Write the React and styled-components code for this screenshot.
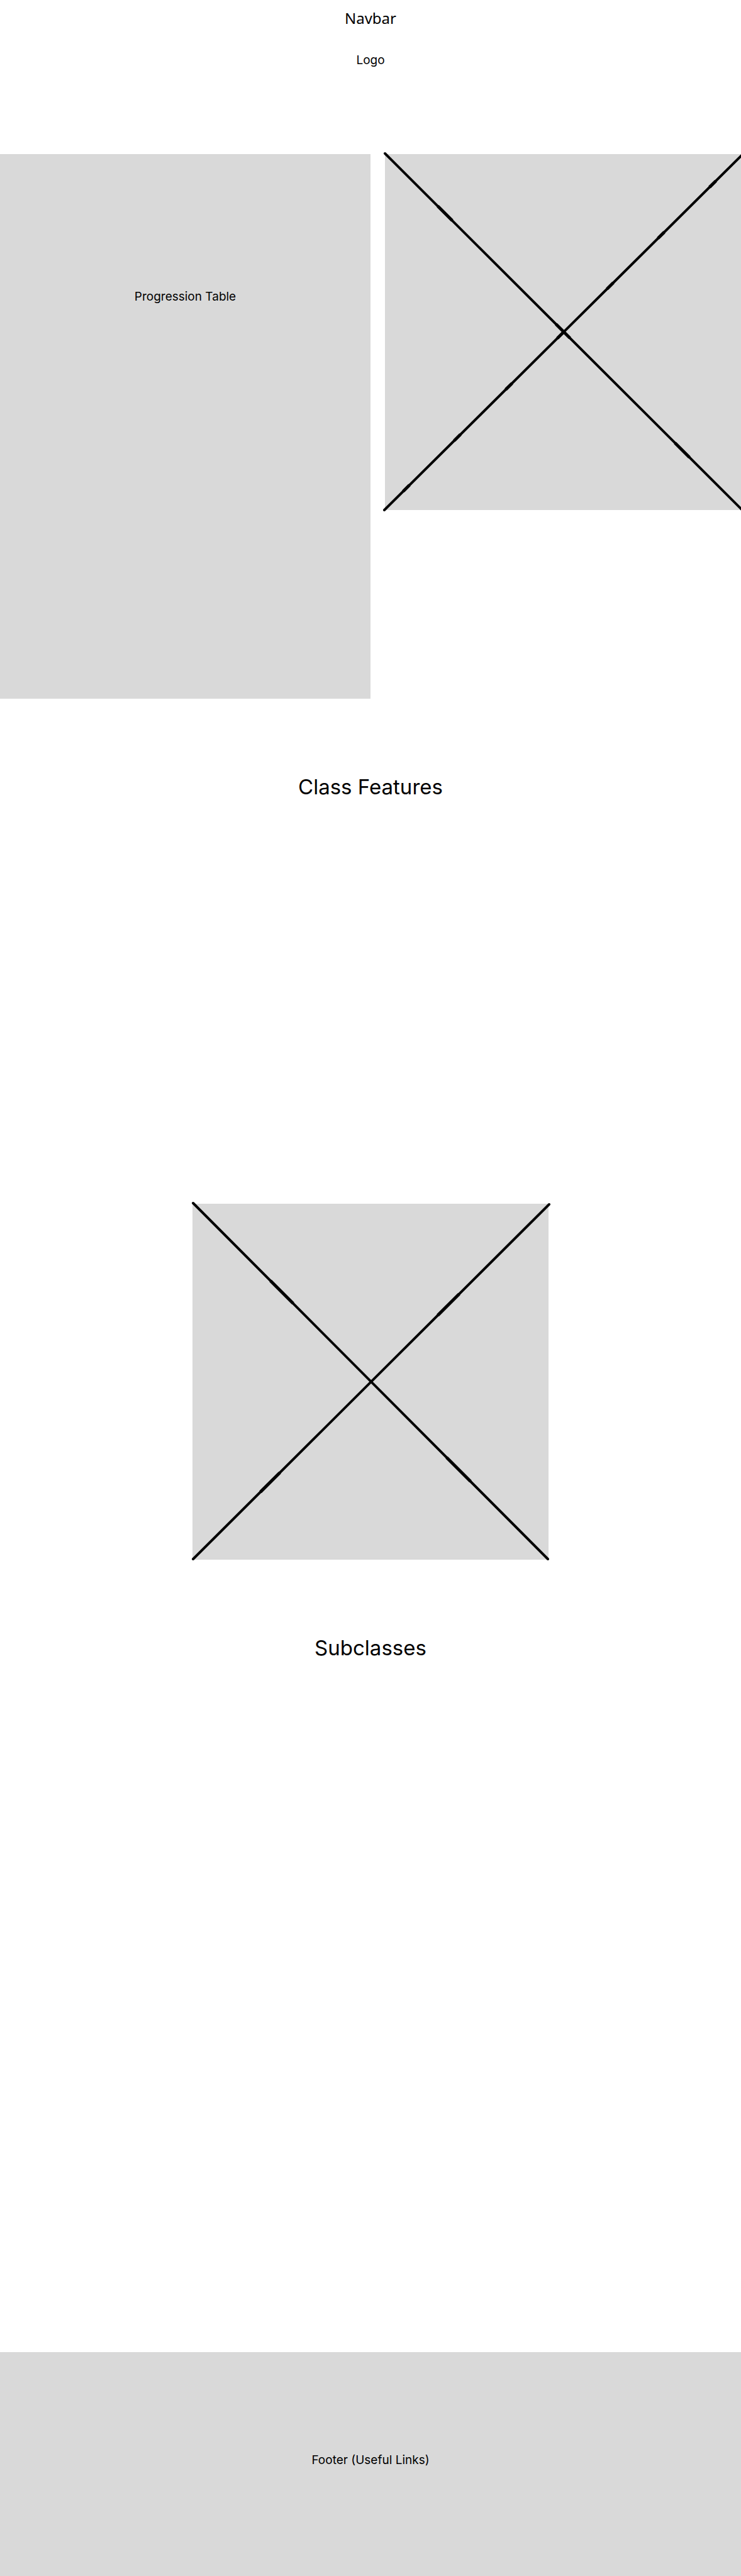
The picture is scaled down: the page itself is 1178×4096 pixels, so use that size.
import React from "react";
import styled, { createGlobalStyle } from "styled-components";

const GlobalStyle = createGlobalStyle`
  * {
    box-sizing: border-box;
  }

  body {
    margin: 0;
    background: #fff;
    color: #000;
    font-family: Inter, "Liberation Sans", sans-serif;
    font-size: 19px;
    line-height: 24px;
    overflow-x: clip;
  }
`;

const Page = styled.div`
  display: flex;
  flex-direction: column;
`;

const Header = styled.header`
  display: flex;
  flex-direction: column;
  align-items: center;
  gap: 39px;
  padding: 13px 0 137px;
`;

const Nav = styled.nav`
  font-family: "Noto Sans", "Open Sans", sans-serif;
  font-size: 24px;
  line-height: 32px;
`;

const Label = styled.p`
  margin: 0;
  text-align: center;
`;

const Hero = styled.section`
  display: grid;
  grid-template-columns: 50% minmax(0, 1fr);
  column-gap: 23px;
  align-items: start;
`;

const Panel = styled.div`
  min-height: 866px;
  padding-top: 215px;
  background: #d9d9d9;
`;

const Section = styled.section`
  min-height: ${({ $minHeight }) => $minHeight}px;
  padding-top: 120px;
`;

const Heading = styled.h2`
  margin: 0;
  font-size: 33px;
  font-weight: 400;
  line-height: 40px;
  text-align: center;
`;

const Figure = styled.div`
  width: 100%;
  max-width: 566px;
  margin: 0 auto;
`;

const Drawing = styled.svg`
  display: block;
  width: 100%;
  aspect-ratio: 1;
  overflow: visible;
  background: #d9d9d9;
  stroke: #000;
  stroke-width: 4;
  stroke-linecap: round;
`;

const Footer = styled.footer`
  min-height: 356px;
  padding-top: 160px;
  background: #d9d9d9;
`;

// Each stroke runs between two points; `bumps` are x ranges where the pen is heavier.
const heroStrokes = [
  { from: [0, -1], to: [568, 566], bumps: [[84, 107], [272, 294], [461, 484]] },
  {
    from: [-1, 566],
    to: [570, -1],
    bumps: [[29, 39], [110, 120], [192, 202], [274, 284], [353, 363], [434, 444], [516, 526]],
  },
];

const featureStrokes = [
  { from: [1, -1], to: [565, 565], bumps: [[124, 160], [404, 442]] },
  { from: [1, 565], to: [567, 1], bumps: [[108, 139], [390, 424]] },
];

function Stroke({ from, to, bumps }) {
  const slope = (to[1] - from[1]) / (to[0] - from[0]);
  const yAt = (x) => from[1] + (x - from[0]) * slope;
  return (
    <g>
      <line x1={from[0]} y1={from[1]} x2={to[0]} y2={to[1]} />
      {bumps.map(([a, b]) => (
        <line key={a} x1={a} y1={yAt(a)} x2={b} y2={yAt(b)} strokeWidth="5" strokeLinecap="butt" />
      ))}
    </g>
  );
}

function Placeholder({ strokes, label }) {
  return (
    <Drawing viewBox="0 0 566 566" role="img" aria-label={label}>
      {strokes.map((stroke, i) => (
        <Stroke key={i} {...stroke} />
      ))}
    </Drawing>
  );
}

export default function App() {
  return (
    <Page>
      <GlobalStyle />
      <Header>
        <Nav>Navbar</Nav>
        <Label>Logo</Label>
      </Header>
      <main>
        <Hero>
          <Panel>
            <Label>Progression Table</Label>
          </Panel>
          <Placeholder strokes={heroStrokes} label="Class image" />
        </Hero>
        <Section $minHeight={803}>
          <Heading>Class Features</Heading>
        </Section>
        <Figure>
          <Placeholder strokes={featureStrokes} label="Feature image" />
        </Figure>
        <Section $minHeight={1260}>
          <Heading>Subclasses</Heading>
        </Section>
      </main>
      <Footer>
        <Label>Footer (Useful Links)</Label>
      </Footer>
    </Page>
  );
}
